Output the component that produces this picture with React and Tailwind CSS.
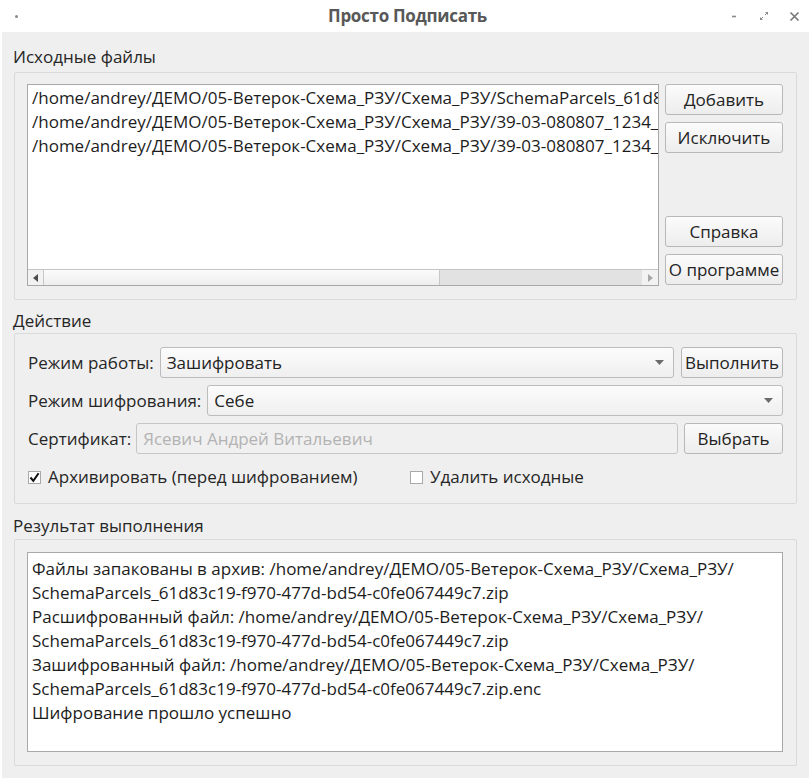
import React from 'react';

const font = { fontFamily: '"Open Sans", "Noto Sans", sans-serif' };

// Small arrow drawn inside combo boxes
const ComboArrow = () => (
  <svg width="9" height="5" viewBox="0 0 9 5" className="shrink-0">
    <path d="M0 0h9L4.5 5z" fill="#6b6b6b" />
  </svg>
);

const Button = ({ children, className = '' }) => (
  <button
    className={`h-[31px] rounded-[3px] border border-[#b8b8b8] bg-gradient-to-b from-[#fbfbfb] to-[#ededed] text-[17px] text-[#232323] leading-none ${className}`}
  >
    {children}
  </button>
);

const Combo = ({ value, className = '' }) => (
  <div
    className={`h-[31px] flex items-center justify-between pl-[6px] pr-[9px] rounded-[3px] border border-[#bcbcbc] bg-gradient-to-b from-[#fcfcfc] to-[#efefef] text-[17px] text-[#232323] ${className}`}
  >
    <span>{value}</span>
    <ComboArrow />
  </div>
);

const Checkbox = ({ checked }) => (
  <span className="w-[13px] h-[13px] border border-[#a9a9a9] bg-white flex items-center justify-center shrink-0">
    {checked && (
      <svg width="11" height="11" viewBox="0 0 11 11">
        <path d="M1.5 5.5l2.8 3.3L9.6 1.2" fill="none" stroke="#111" strokeWidth="2" />
      </svg>
    )}
  </span>
);

const GroupLabel = ({ children, className = '' }) => (
  <div className={`h-[22px] leading-[22px] text-[17px] text-[#262626] -ml-px ${className}`}>{children}</div>
);

export default function App() {
  const files = [
    '/home/andrey/ДЕМО/05-Ветерок-Схема_РЗУ/Схема_РЗУ/SchemaParcels_61d83c19-f970-477d-bd54-c0fe067449c7.xml',
    '/home/andrey/ДЕМО/05-Ветерок-Схема_РЗУ/Схема_РЗУ/39-03-080807_1234_2021-09-14.xml',
    '/home/andrey/ДЕМО/05-Ветерок-Схема_РЗУ/Схема_РЗУ/39-03-080807_1234_2021-09-15.xml',
  ];

  const log = [
    'Файлы запакованы в архив: /home/andrey/ДЕМО/05-Ветерок-Схема_РЗУ/Схема_РЗУ/',
    'SchemaParcels_61d83c19-f970-477d-bd54-c0fe067449c7.zip',
    'Расшифрованный файл: /home/andrey/ДЕМО/05-Ветерок-Схема_РЗУ/Схема_РЗУ/',
    'SchemaParcels_61d83c19-f970-477d-bd54-c0fe067449c7.zip',
    'Зашифрованный файл: /home/andrey/ДЕМО/05-Ветерок-Схема_РЗУ/Схема_РЗУ/',
    'SchemaParcels_61d83c19-f970-477d-bd54-c0fe067449c7.zip.enc',
    'Шифрование прошло успешно',
  ];

  return (
    <div className="w-[811px] h-[780px] bg-white overflow-hidden" style={font}>
      {/* Title bar */}
      <div className="h-[32px] flex items-center pl-[15px] pr-[11px]">
        <div className="w-[90px] flex">
          <span className="w-[3px] h-[3px] rounded-full bg-[#8a8a8a]" />
        </div>
        <div className="flex-1 flex justify-center">
          <span className="font-bold text-[17px] text-[#585858] tracking-[-0.3px]">Просто Подписать</span>
        </div>
        <div className="w-[90px] flex items-center justify-end gap-[20px]">
          <svg width="10" height="10" viewBox="0 0 10 10">
            <path d="M3 5.5h4" stroke="#8a8a8a" strokeWidth="1.6" />
          </svg>
          <svg width="10" height="10" viewBox="0 0 10 10">
            <path d="M6 1h3v3zM1 9V6l3 3z" fill="#8a8a8a" />
            <path d="M8 2L6 4M2 8l2-2" stroke="#8a8a8a" strokeWidth="1" />
          </svg>
          <svg width="11" height="11" viewBox="0 0 11 11">
            <path d="M1.5 1.5l8 8M9.5 1.5l-8 8" stroke="#7a7a7a" strokeWidth="1.7" />
          </svg>
        </div>
      </div>

      {/* Window body */}
      <div className="mx-[2px] h-[746px] bg-[#efefef] px-[12px] pt-[14px]">
        <GroupLabel>Исходные файлы</GroupLabel>
        <div className="mt-[4px] h-[228px] border border-[#dadada] rounded-[2px] pl-[12px] pr-[13px] pt-[11px] flex gap-[6px]">
          {/* File list */}
          <div className="w-[632px] h-[202px] border border-[#a8a8a8] bg-white flex flex-col">
            <div className="flex-1 pt-[1px] pl-[4px] overflow-hidden">
              {files.map((f) => (
                <div key={f} className="h-[24px] leading-[24px] text-[17px] text-[#1c1c1c] whitespace-nowrap">
                  {f}
                </div>
              ))}
            </div>
            {/* Horizontal scrollbar */}
            <div className="h-[16px] border-t border-[#c4c4c4] flex">
              <div className="w-[16px] border-r border-[#c8c8c8] bg-[#f2f2f2] flex items-center justify-center">
                <svg width="5" height="8" viewBox="0 0 5 8">
                  <path d="M5 0v8L0 4z" fill="#4d4d4d" />
                </svg>
              </div>
              <div className="w-[396px] bg-gradient-to-b from-[#fbfbfb] to-[#eeeeee] border-r border-[#c8c8c8]" />
              <div className="flex-1 bg-[#e2e2e2]" />
              <div className="w-[16px] bg-[#f2f2f2] flex items-center justify-center">
                <svg width="5" height="8" viewBox="0 0 5 8">
                  <path d="M0 0v8L5 4z" fill="#a8a8a8" />
                </svg>
              </div>
            </div>
          </div>
          {/* Side buttons */}
          <div className="w-[118px] flex flex-col">
            <Button className="w-full">Добавить</Button>
            <Button className="w-full mt-[7px]">Исключить</Button>
            <div className="flex-1" />
            <Button className="w-full">Справка</Button>
            <Button className="w-full mt-[7px] mb-[14px]">О программе</Button>
          </div>
        </div>

        <GroupLabel className="mt-[10px]">Действие</GroupLabel>
        <div className="mt-[1px] h-[171px] border border-[#dadada] rounded-[2px] pl-[13px] pr-[13px] pt-[13px] flex flex-col gap-[7px]">
          <div className="flex items-center gap-[6px] text-[17px] text-[#262626]">
            <span>Режим работы:</span>
            <Combo value="Зашифровать" className="flex-1" />
            <Button className="w-[102px] ml-[1px]">Выполнить</Button>
          </div>
          <div className="flex items-center gap-[6px] text-[17px] text-[#262626]">
            <span>Режим шифрования:</span>
            <Combo value="Себе" className="flex-1" />
          </div>
          <div className="flex items-center gap-[5px] text-[17px] text-[#262626]">
            <span>Сертификат:</span>
            <div className="flex-1 h-[31px] rounded-[3px] border border-[#c6c6c6] bg-[#f0f0f0] flex items-center pl-[6px] text-[#b3b3b3]">
              Ясевич Андрей Витальевич
            </div>
            <Button className="w-[99px] ml-[1px]">Выбрать</Button>
          </div>
          <div className="flex items-center h-[24px] mt-[4px] text-[17px] text-[#262626]">
            <label className="flex items-center gap-[7px] w-[382px]">
              <Checkbox checked />
              <span>Архивировать (перед шифрованием)</span>
            </label>
            <label className="flex items-center gap-[7px]">
              <Checkbox />
              <span>Удалить исходные</span>
            </label>
          </div>
        </div>

        <GroupLabel className="mt-[11px]">Результат выполнения</GroupLabel>
        <div className="mt-[2px] h-[227px] border border-[#dadada] rounded-[2px] pl-[12px] pr-[13px] pt-[12px]">
          <div className="h-[200px] border border-[#a8a8a8] bg-white pl-[4px] pt-[4px]">
            {log.map((line, i) => (
              <div key={i} className="h-[24px] leading-[24px] text-[17px] text-[#1c1c1c] whitespace-nowrap">
                {line}
              </div>
            ))}
          </div>
        </div>
      </div>
    </div>
  );
}
